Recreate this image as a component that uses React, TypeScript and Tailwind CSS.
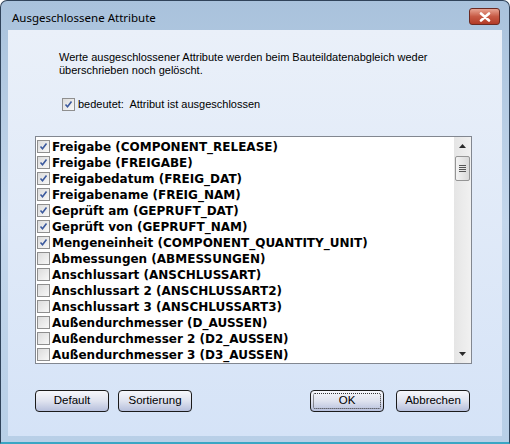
import React from 'react'

const items: [string, boolean][] = [
  ['Freigabe (COMPONENT_RELEASE)', true],
  ['Freigabe (FREIGABE)', true],
  ['Freigabedatum (FREIG_DAT)', true],
  ['Freigabename (FREIG_NAM)', true],
  ['Geprüft am (GEPRUFT_DAT)', true],
  ['Geprüft von (GEPRUFT_NAM)', true],
  ['Mengeneinheit (COMPONENT_QUANTITY_UNIT)', true],
  ['Abmessungen (ABMESSUNGEN)', false],
  ['Anschlussart (ANSCHLUSSART)', false],
  ['Anschlussart 2 (ANSCHLUSSART2)', false],
  ['Anschlussart 3 (ANSCHLUSSART3)', false],
  ['Außendurchmesser (D_AUSSEN)', false],
  ['Außendurchmesser 2 (D2_AUSSEN)', false],
  ['Außendurchmesser 3 (D3_AUSSEN)', false],
]

const CheckBox = ({ checked }: { checked: boolean }) => (
  <div className="w-[13px] h-[13px] shrink-0 border border-[#8f8f8f] bg-gradient-to-br from-[#dcdcdc] to-[#f8f8f8] flex items-center justify-center">
    {checked && (
      <svg width="9" height="9" viewBox="0 0 9 9">
        <path d="M1.5 4.5 L3.5 6.8 L7.5 1.5" fill="none" stroke="#3c5a9e" strokeWidth="1.6" />
      </svg>
    )}
  </div>
)

const Button = ({ label, focused }: { label: string; focused?: boolean }) => (
  <button className="block w-[74px] h-[22px] rounded-[4px] border border-[#1b1b1b] bg-gradient-to-b from-[#f6f7fb] via-[#dfe3ef] to-[#b7c0dc] p-[2px] text-[11.5px] leading-none text-black">
    <div className={`w-full h-full flex items-center justify-center rounded-[2px] ${focused ? 'border border-dotted border-[#333]' : ''}`}>
      {label}
    </div>
  </button>
)

export default function App() {
  return (
    <div
      className="w-[510px] h-[444px] flex flex-col bg-gradient-to-b from-[#a9c2dc] via-[#c4d7ec] to-[#b8cfe7] border border-[#30435a] rounded-t-[7px] border-b-[2px] border-b-[#3aa6c4] overflow-hidden"
      style={{ fontFamily: '"Liberation Sans", Arial, sans-serif' }}
    >
      <div className="h-[29px] shrink-0 flex items-center pl-[11px] pr-[9px]">
        <span className="text-[11.5px] text-black pt-[5px]" style={{ fontFamily: '"Noto Sans", "Open Sans", sans-serif' }}>
          Ausgeschlossene Attribute
        </span>
        <div className="ml-auto mt-[2px] w-[31px] h-[17px] rounded-[3px] border border-[#6b2a22] bg-gradient-to-b from-[#e8a493] via-[#c75a45] to-[#b23a26] flex items-center justify-center">
          <svg width="12" height="10" viewBox="0 0 12 10">
            <path d="M2 1.5 L10 8.5 M10 1.5 L2 8.5" stroke="#ffffff" strokeWidth="2.6" strokeLinecap="round" />
          </svg>
        </div>
      </div>
      <div className="flex-1 mx-[7px] mb-[6px] bg-gradient-to-b from-[#eaf0f9] to-[#d5e3f7] flex flex-col relative">
        <p className="mt-[21px] ml-[51px] text-[11px] leading-[13px] text-black w-[380px]">
          Werte ausgeschlossener Attribute werden beim Bauteildatenabgleich weder überschrieben noch gelöscht.
        </p>
        <div className="mt-[19px] ml-[54px] flex items-center gap-[3px] text-[11px] text-black">
          <CheckBox checked />
          <span>bedeutet:&nbsp; Attribut ist ausgeschlossen</span>
        </div>
        <div className="mt-[23px] ml-[27px] w-[437px] h-[228px] bg-white border border-[#828790] flex">
          <div className="flex-1 pt-[2px] pl-[1px] overflow-hidden">
            {items.map(([label, checked]) => (
              <div key={label} className="h-[16px] flex items-center gap-[2px] whitespace-nowrap">
                <CheckBox checked={checked} />
                <span className="text-[12px] font-bold text-black" style={{ fontFamily: '"DejaVu Sans", Verdana, sans-serif' }}>
                  {label}
                </span>
              </div>
            ))}
          </div>
          <div className="w-[17px] bg-gradient-to-r from-[#e5e5e5] to-[#f1f1f1] flex flex-col items-center">
            <div className="h-[19px] flex items-center justify-center">
              <svg width="7" height="4" viewBox="0 0 7 4"><path d="M0 4 L3.5 0 L7 4 Z" fill="#2b2b2b" /></svg>
            </div>
            <div className="w-[15px] h-[25px] rounded-[2px] border border-[#959595] bg-gradient-to-r from-[#f3f3f3] to-[#d9d9d9] flex flex-col items-center justify-center gap-[1px]">
              <div className="w-[7px] h-[1px] bg-[#555]" />
              <div className="w-[7px] h-[1px] bg-[#555]" />
              <div className="w-[7px] h-[1px] bg-[#555]" />
              <div className="w-[7px] h-[1px] bg-[#555]" />
            </div>
            <div className="mt-auto h-[17px] flex items-center justify-center">
              <svg width="7" height="4" viewBox="0 0 7 4"><path d="M0 0 L3.5 4 L7 0 Z" fill="#2b2b2b" /></svg>
            </div>
          </div>
        </div>
        <div className="mt-[26px] ml-[27px] flex items-start">
          <Button label="Default" />
          <div className="ml-[9px] flex"><Button label="Sortierung" /></div>
          <div className="ml-[118px] flex"><Button label="OK" focused /></div>
          <div className="ml-[12px] flex"><Button label="Abbrechen" /></div>
        </div>
      </div>
    </div>
  )
}
